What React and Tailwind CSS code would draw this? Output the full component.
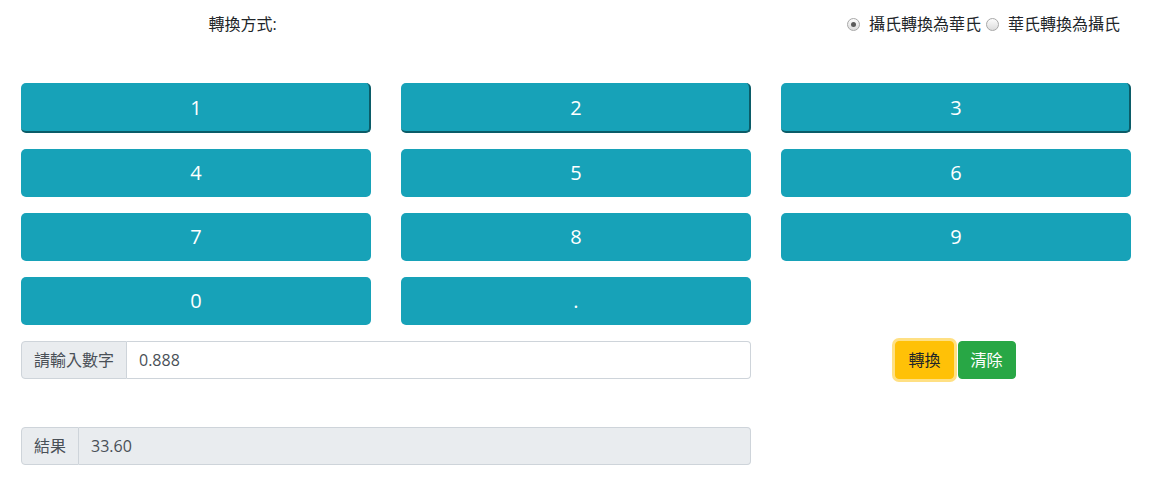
import { useState } from 'react'

const FONT = { fontFamily: '"Open Sans", "Noto Sans CJK TC", sans-serif' }

function Radio({ checked, label, onClick }) {
  return (
    <label className="flex items-center cursor-pointer select-none" onClick={onClick}>
      <span className="relative w-[13px] h-[13px] rounded-full border border-[#a8a8a8] bg-gradient-to-b from-[#fcfcfc] to-[#dcdcdc] flex items-center justify-center">
        {checked && <span className="w-[5px] h-[5px] rounded-full bg-[#5a5a5a]"></span>}
      </span>
      <span className="ml-[9px] mr-[5px] text-[16px] leading-6 text-[#212529]">{label}</span>
    </label>
  )
}

export default function App() {
  const [mode, setMode] = useState('c2f')
  const [value, setValue] = useState('0.888')
  const [result, setResult] = useState('33.60')

  const keys = ['1', '2', '3', '4', '5', '6', '7', '8', '9', '0', '.']

  // 轉換溫度
  const handleConvert = () => {
    const n = parseFloat(value)
    if (isNaN(n)) return
    const r = mode === 'c2f' ? n * 9 / 5 + 32 : (n - 32) * 5 / 9
    setResult(r.toFixed(2))
  }

  return (
    <div className="w-[1150px] h-[486px] bg-white text-[#212529]" style={FONT}>
      {/* 標題與轉換方式 */}
      <div className="flex items-center pt-[12px] h-[36px]">
        <div className="w-[475px] ml-[5px] text-center text-[16px] leading-6">轉換方式:</div>
        <div className="flex-1 flex justify-end items-center pr-[25px]">
          <Radio checked={mode === 'c2f'} label="攝氏轉換為華氏" onClick={() => setMode('c2f')} />
          <Radio checked={mode === 'f2c'} label="華氏轉換為攝氏" onClick={() => setMode('f2c')} />
        </div>
      </div>

      {/* 數字鍵盤 */}
      <div className="grid grid-cols-[350px_350px_350px] gap-x-[30px] gap-y-[16px] pl-[21px] mt-[47px]">
        {keys.map((k, i) => (
          <button
            key={k}
            type="button"
            onClick={() => setValue(value + k)}
            className={`bg-[#17a2b8] text-white text-[20px] leading-[30px] rounded-[5px] ${
              i < 3 ? 'h-[50px] border-r-2 border-b-2 border-[#0b5c68] pl-[2px] pt-[2px]' : 'h-[48px]'
            }`}
          >
            {k}
          </button>
        ))}
        <div></div>

        {/* 輸入欄 */}
        <div className="col-span-2 flex h-[38px] text-[16px]">
          <div className="px-[12px] flex items-center bg-[#e9ecef] border border-[#ced4da] rounded-l-[4px] text-[#495057]">
            請輸入數字
          </div>
          <input
            value={value}
            onChange={(e) => setValue(e.target.value)}
            className="flex-1 px-[12px] border border-l-0 border-[#ced4da] rounded-r-[4px] text-[#495057] outline-none"
          />
        </div>
        <div className="flex justify-center items-center gap-[4px] pr-[1px]">
          <button
            type="button"
            onClick={handleConvert}
            className="h-[38px] px-[12px] text-[16px] bg-[#ffc107] border border-[#ffc107] text-[#212529] rounded-[4px] ring-[3px] ring-[rgba(255,193,7,0.5)]"
          >
            轉換
          </button>
          <button
            type="button"
            onClick={() => { setValue(''); setResult('') }}
            className="h-[38px] px-[12px] text-[16px] bg-[#28a745] border border-[#28a745] text-white rounded-[4px]"
          >
            清除
          </button>
        </div>
      </div>

      {/* 結果 */}
      <div className="pl-[21px] mt-[48px]">
        <div className="flex w-[730px] h-[38px] text-[16px]">
          <div className="px-[12px] flex items-center bg-[#e9ecef] border border-[#ced4da] rounded-l-[4px] text-[#495057]">
            結果
          </div>
          <div className="flex-1 px-[12px] flex items-center bg-[#e9ecef] border border-l-0 border-[#ced4da] rounded-r-[4px] text-[#495057]">
            {result}
          </div>
        </div>
      </div>
    </div>
  )
}
